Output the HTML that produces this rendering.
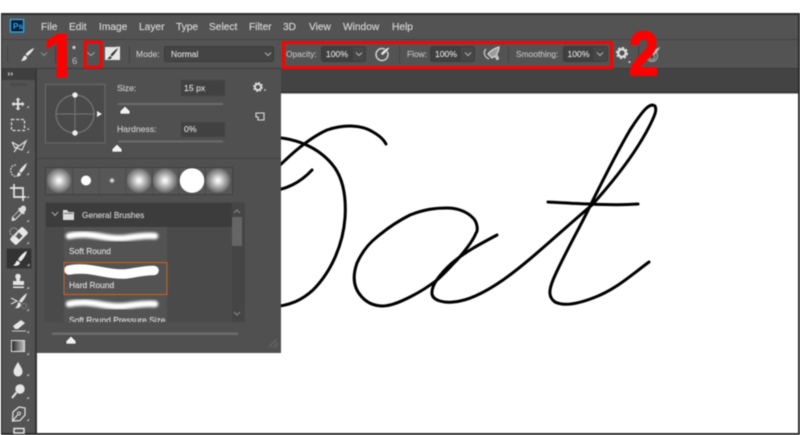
<!DOCTYPE html>
<html><head><meta charset="utf-8"><style>
html,body{margin:0;padding:0;background:#fff;width:800px;height:435px;overflow:hidden}
svg{display:block;filter:blur(.45px)}
text{font-family:"Liberation Sans",sans-serif;stroke-width:.15px}
</style></head><body>
<svg width="800" height="435" viewBox="0 0 800 435" xmlns="http://www.w3.org/2000/svg">
<defs>
<radialGradient id="sb"><stop offset="0" stop-color="#fff"/><stop offset=".15" stop-color="#eee"/><stop offset=".55" stop-color="#aaa"/><stop offset=".95" stop-color="#6c6c6c"/><stop offset="1" stop-color="#606060"/></radialGradient>
<linearGradient id="gr" x1="0" x2="1"><stop offset="0" stop-color="#222"/><stop offset="1" stop-color="#c4c4c4"/></linearGradient>
<filter id="b2" x="-10%" y="-80%" width="120%" height="260%"><feGaussianBlur stdDeviation="1.2"/></filter>
<clipPath id="c1"><path d="M40 25H70V66H67V80H56.500V66H40Z"/></clipPath>
<clipPath id="lst"><rect x="46" y="227" width="186" height="95"/></clipPath>
</defs>
<rect width="800" height="435" fill="#fff"/>
<!-- chrome -->
<rect x="1" y="13" width="799" height="422" fill="#2c2c2c"/>
<rect x="2" y="15" width="796" height="24" fill="#535353"/>
<rect x="2" y="39" width="796" height="1" fill="#424242"/>
<rect x="2" y="40" width="796" height="28" fill="#535353"/>
<rect x="2" y="68" width="796" height="1" fill="#3a3a3a"/>
<rect x="2" y="69" width="796" height="23" fill="#434343"/>
<rect x="2" y="92" width="796" height="1" fill="#222"/>
<rect x="37" y="93" width="761" height="1" fill="#aaa"/>
<rect x="37" y="94" width="761" height="339" fill="#fff"/>
<rect x="2" y="69" width="33" height="364" fill="#535353"/>
<rect x="2" y="69" width="33" height="11" fill="#3f3f3f"/>
<rect x="35" y="69" width="2" height="364" fill="#333"/>
<!-- drawing -->
<g fill="none" stroke="#000" stroke-width="3" stroke-linecap="round" stroke-linejoin="round">
<path d="M270 137C300 138 322 150 335 168C345 183 346 203 345 218C343 245 331 272 313 290C302 300 290 306 270 307"/>
<path d="M270 175C285 160 305 140 327 130C345 124 362 125 373 132C380 136 384 140 386 144"/>
<path d="M270 191C285 190 300 183 312 170"/>
<path d="M497 235C480 244 465 252 452 263C440 274 431 285 432 294C433 301 445 303 453 302C470 301 490 289 503 280C530 261 560 232 592 205C610 185 635 155 650 125C655 115 657 110 655 106C650 102 643 110 630 130C620 147 603 180 593 200C583 222 562 258 553 280C549 290 548 297 555 302C565 307 580 303 593 298C615 290 630 276 649 262"/>
<path d="M437 280C428 287 418 293 410 297C398 303 390 306 383 306C373 306 366 302 361 296C354 288 352 277 357 263C362 252 368 244 377 237C390 226 402 219 410 215C425 209 436 208 447 208C458 208 467 212 472 217C478 222 478 231 476 233C473 241 464 252 457 260C450 267 444 274 437 280Z"/>
<path d="M548 202C565 203 580 204 590 204C610 205 625 205 638 204" stroke-width="3"/>
</g>
<!-- menu -->
<rect x="10.500" y="19.500" width="13" height="12.500" fill="#001d34" stroke="#2fa3e8" stroke-width="1.400"/>
<text x="13" y="29" font-size="8" font-weight="bold" fill="#38a8f0">Ps</text>
<g font-size="10.200" fill="#d6d6d6" stroke="#d6d6d6">
<text x="41" y="30">File</text><text x="69" y="30">Edit</text><text x="99" y="30">Image</text><text x="139" y="30">Layer</text><text x="176" y="30">Type</text><text x="209" y="30">Select</text><text x="249" y="30">Filter</text><text x="283" y="30">3D</text><text x="309" y="30">View</text><text x="343" y="30">Window</text><text x="392" y="30">Help</text>
</g>
<!-- options -->
<rect x="7" y="46" width="1" height="16" fill="#444"/>
<path d="M34 48C31 49 27 52 25.500 54.500L27.500 56C30 54 33 51 34 48ZM25 55.500C23 56 23 59 21 61C24 61 27 60 27 57Z" fill="#e8e8e8"/>
<path d="M41 52.500L44 55.500L47 52.500" fill="none" stroke="#8f8f8f" stroke-width="1"/>
<rect x="55" y="46" width="1" height="17" fill="#404040"/>
<circle cx="74" cy="47.500" r="1.600" fill="#cfcfcf"/>
<text x="72" y="64" font-size="9.500" fill="#c0c0c0">6</text>
<path d="M87.500 52.500L91 55.500L94.500 52.500" fill="none" stroke="#aaa" stroke-width="1"/>
<path d="M105 47H114L120 46.500V60H105Z" fill="#e6e6e6"/>
<path d="M118 48C115 50 112 53 110.500 55L112 56.500C114 54.500 117 51 118 48ZM110 56C109 57 109 58 107 59C110 59.500 112 58.500 111.500 57Z" fill="#333"/>
<rect x="129" y="46" width="1" height="17" fill="#404040"/>
<text x="136" y="57" font-size="8.500" fill="#c4c4c4" stroke="#c4c4c4">Mode:</text>
<rect x="164.500" y="46.500" width="109" height="15" rx="2" fill="#444" stroke="#3a3a3a"/>
<text x="171" y="57" font-size="8.500" fill="#dcdcdc" stroke="#dcdcdc">Normal</text>
<path d="M265 52.500L268 55.500L271 52.500" fill="none" stroke="#b0b0b0" stroke-width="1"/>
<!-- fields -->
<g fill="#474747" stroke="#3c3c3c">
<rect x="321.500" y="46.500" width="44" height="15" rx="2"/><rect x="430.500" y="46.500" width="44" height="15" rx="2"/><rect x="563.500" y="46.500" width="44" height="15" rx="2"/>
</g>
<g fill="#3f3f3f"><rect x="322" y="47" width="31" height="14"/><rect x="431" y="47" width="30" height="14"/><rect x="564" y="47" width="29.500" height="14"/></g>
<g font-size="8.400" fill="#bdbdbd" stroke="#bdbdbd"><text x="286" y="57">Opacity:</text><text x="407" y="57">Flow:</text><text x="516" y="57">Smoothing:</text></g>
<g font-size="8.600" fill="#dcdcdc" stroke="#dcdcdc"><text x="326" y="57">100%</text><text x="435" y="57">100%</text><text x="567.500" y="57">100%</text></g>
<g fill="none" stroke="#b0b0b0" stroke-width="1"><path d="M356 52.500L359 55.500L362 52.500"/><path d="M465 52.500L468 55.500L471 52.500"/><path d="M597 52.500L600 55.500L603 52.500"/></g>
<circle cx="382" cy="54.500" r="6" fill="none" stroke="#d0d0d0" stroke-width="1.500"/>
<path d="M390 47C386 48 382 51 380.500 54L382.500 55.500C385 53.500 389 50 390 47Z" fill="#ececec" stroke="#535353" stroke-width=".6"/>
<path d="M486 49C483 52 484 57 489 59" fill="none" stroke="#c8c8c8" stroke-width="1.300"/>
<path d="M499 47C495 48 490 51 488 54L492 58L495 56L497 59.500L498.500 58.500L496.500 54.500C498 52 499 49 499 47Z" fill="#9a9a9a" stroke="#d8d8d8" stroke-width="1.200"/>
<rect x="399" y="46" width="1" height="17" fill="#444"/><rect x="508" y="46" width="1" height="17" fill="#444"/>
<circle cx="622" cy="53" r="3.800" fill="none" stroke="#dcdcdc" stroke-width="2.400"/>
<circle cx="622" cy="53" r="5.400" fill="none" stroke="#dcdcdc" stroke-width="1.500" stroke-dasharray="2.200 2"/>
<circle cx="629.500" cy="62" r="1" fill="#ddd"/>
<rect x="638" y="46" width="1" height="17" fill="#404040"/>
<circle cx="652" cy="56" r="5.500" fill="none" stroke="#aaa" stroke-width="1"/><circle cx="652" cy="57" r="2.800" fill="none" stroke="#aaa" stroke-width="1"/>
<path d="M660 47C657 48 653 51 652 54L654 55C656.500 53 659 50 660 47Z" fill="#bbb"/>
<!-- toolbar -->
<path d="M8 72.500L9.500 74L8 75.500M11 72.500L12.500 74L11 75.500" fill="none" stroke="#c8c8c8" stroke-width="1"/>
<rect x="10" y="83" width="17" height="3" fill="#4a4a4a"/>
<g fill="#e2e2e2">
<path d="M18 97.500L20.500 100H19V103H22V101.500L24.500 104L22 106.500V105H19V108H20.500L18 110.500L15.500 108H17V105H14V106.500L11.500 104L14 101.500V103H17V100H15.500Z"/>
</g>
<rect x="11.500" y="119.500" width="13" height="11" fill="none" stroke="#ddd" stroke-width="1.300" stroke-dasharray="3 1.700"/>
<path d="M12 142L19 146L26 141L22 150L17 148L14 152M12 142L15 148L19 146" fill="none" stroke="#ddd" stroke-width="1.200"/>
<path d="M16 165C12 165 10 168 11 172C12 176 15 177 17 176" fill="none" stroke="#ccc" stroke-width="1.300" stroke-dasharray="2 1"/>
<path d="M27 163C24 165 21 168 19 171L21 173C23.500 171 26 167 27 163ZM18.500 172C17 173 18 175 16 176.500C19 177 22 175 20.500 173.500Z" fill="#e4e4e4"/>
<path d="M14 184V197H26M10 188H23V201" fill="none" stroke="#e4e4e4" stroke-width="1.700"/>
<path d="M25 206C23 205 21 206 20.500 208L19.500 207.500L18 209L19 210L12 217L11.500 221L15 220.500L22 213.500L23.500 214.500L25 213L24 212C26 211.500 27 209 25 206Z" fill="#ddd"/>
<path d="M13 217L19 211L21 213L15 219Z" fill="#535353"/>
<g transform="rotate(-45 19 236)"><rect x="10" y="231.500" width="18" height="9" rx="2" fill="#e8e8e8"/><rect x="16.500" y="233.500" width="5" height="5" fill="#555"/></g>
<circle cx="14" cy="232" r="4" fill="none" stroke="#bbb" stroke-dasharray="1.500 1" stroke-width="1"/>
<rect x="6.500" y="248.500" width="25" height="20" rx="1" fill="#333" stroke="#454545"/>
<path d="M27 251C24 252 20 256 18 259.500L20.500 261.500C23.500 259 26 255 27 251ZM17.500 260.500C15.500 261.500 16 264 13 265.500C17 266.500 21 264.500 19.500 262Z" fill="#eee"/>
<path d="M16 278.500a2.800 2.800 0 1 1 4 0L19.800 281H24V285H13V281H16.500ZM13 286.500H24V288H13Z" fill="#e4e4e4"/>
<path d="M27 293C24 295 21 298 19 301L21 303C23.500 301 26 297 27 293ZM18.500 302C17 304 18 306 15 308C19 309 22 306 20.500 303.500Z" fill="#e4e4e4"/>
<path d="M11 298L17 301L11 304" fill="none" stroke="#ddd" stroke-width="1.200"/>
<circle cx="24" cy="306" r="2.500" fill="none" stroke="#999" stroke-dasharray="1 1"/>
<path d="M13 326L21 320L25 323L18 329H15Z" fill="#e6e6e6"/><path d="M12 331H26" stroke="#ccc"/>
<rect x="11.500" y="340.500" width="13" height="11" fill="url(#gr)" stroke="#ddd"/>
<path d="M18 362C15 367 13.500 369 13.500 372A4.500 4.500 0 0 0 22.500 372C22.500 369 21 367 18 362Z" fill="#e6e6e6"/>
<circle cx="20" cy="389" r="4.700" fill="#e6e6e6"/><path d="M16.500 392.500L12 398" stroke="#e6e6e6" stroke-width="2"/>
<path d="M25 408L19 407L13 412L12.500 421L20 420.500L25 415L25 408ZM12.500 421L17.500 415" fill="none" stroke="#ddd" stroke-width="1.300"/>
<circle cx="19" cy="413.500" r="1.500" fill="none" stroke="#ddd"/>
<path d="M14 428.500H24V433H14Z" fill="none" stroke="#e4e4e4" stroke-width="1.500"/>
<g fill="#bdbdbd"><path d="M29 108v-2.500l-2.500 2.500zM29 130v-2.500l-2.500 2.500zM29 153v-2.500l-2.500 2.500zM29 175v-2.500l-2.500 2.500zM29 198v-2.500l-2.500 2.500zM29 222v-2.500l-2.500 2.500zM29 244v-2.500l-2.500 2.500zM29.500 266v-2.500l-2.500 2.500zM29 289v-2.500l-2.500 2.500zM29 311v-2.500l-2.500 2.500zM29 333v-2.500l-2.500 2.500zM29 355v-2.500l-2.500 2.500zM29 376v-2.500l-2.500 2.500zM29 399v-2.500l-2.500 2.500zM29 421v-2.500l-2.500 2.500z"/></g>
<!-- brush panel -->
<rect x="37" y="69" width="244" height="284" fill="#505050"/>
<rect x="36" y="69" width="1" height="284" fill="#3c3c3c"/>
<rect x="45.500" y="84.500" width="59.500" height="58.500" fill="#4a4a4a" stroke="#6c6c6c"/>
<circle cx="75" cy="114" r="19" fill="none" stroke="#767676" stroke-width="1.200"/>
<path d="M75 95V133M56 114H94" stroke="#767676" stroke-width="1"/>
<circle cx="75" cy="95" r="2.700" fill="#eee"/><circle cx="75" cy="133" r="2.700" fill="#eee"/>
<path d="M97 111L102 114L97 117Z" fill="#eee"/>
<g font-size="8.700" fill="#c8c8c8" stroke="#c8c8c8"><text x="117" y="91">Size:</text><text x="117" y="132">Hardness:</text></g>
<rect x="181" y="80" width="44" height="16" fill="#414141" stroke="#4a4a4a"/>
<rect x="181" y="122" width="44" height="15" fill="#414141" stroke="#4a4a4a"/>
<g font-size="8.700" fill="#dadada" stroke="#dadada"><text x="184" y="91">15 px</text><text x="184" y="132">0%</text></g>
<circle cx="258" cy="87" r="3" fill="none" stroke="#dcdcdc" stroke-width="1.900"/>
<circle cx="258" cy="87" r="4.300" fill="none" stroke="#dcdcdc" stroke-width="1.300" stroke-dasharray="1.800 1.600"/>
<circle cx="265" cy="90" r=".9" fill="#ddd"/>
<path d="M256 113H264V120H258V117H256Z" fill="none" stroke="#ddd" stroke-width="1.100"/>
<rect x="118" y="103" width="105" height="2" fill="#6c6c6c"/>
<rect x="118" y="140.500" width="105" height="2" fill="#6c6c6c"/>
<path d="M125 106L130 111V114H120V111Z" fill="#f2f2f2" stroke="#333" stroke-width=".6"/>
<path d="M117 144L122 149V152H112V149Z" fill="#f2f2f2" stroke="#333" stroke-width=".6"/>
<rect x="37" y="158" width="244" height="1" fill="#404040"/>
<rect x="45" y="167" width="188" height="28" fill="#3f3f3f"/>
<g fill="#575757"><rect x="46" y="168" width="26.500" height="26"/><rect x="73" y="168" width="26" height="26"/><rect x="99.500" y="168" width="26" height="26"/><rect x="126" y="168" width="26" height="26"/><rect x="152.500" y="168" width="26" height="26"/><rect x="179" y="168" width="26" height="26"/><rect x="205.500" y="168" width="26.500" height="26"/></g>
<g fill="url(#sb)"><circle cx="59" cy="180.500" r="12.500"/><circle cx="139" cy="180.500" r="12.500"/><circle cx="165" cy="180.500" r="12.500"/><circle cx="218" cy="180.500" r="12.500"/></g>
<circle cx="86" cy="180.500" r="5" fill="#fff"/><circle cx="112" cy="180.500" r="3" fill="url(#sb)"/><circle cx="192" cy="180.500" r="12.300" fill="#fff"/>
<!-- list -->
<rect x="45" y="202" width="200" height="120" fill="#484848"/>
<rect x="46" y="203" width="186" height="24" fill="#3c3c3c"/>
<rect x="46" y="227" width="186" height="95" fill="#4a4a4a"/>
<rect x="232" y="203" width="13" height="119" fill="#454545"/>
<rect x="232" y="217" width="10" height="29" fill="#656565"/>
<path d="M234 213L237 210L240 213M234 312L237 315L240 312" fill="none" stroke="#8a8a8a" stroke-width="1"/>
<path d="M52 212L55 215.500L58 212" fill="none" stroke="#aaa" stroke-width="1"/>
<path d="M63 210H67L68.500 212H74V220H63Z" fill="#dcdcdc"/><rect x="64" y="213" width="9" height=".8" fill="#555"/>
<text x="82" y="218" font-size="8.300" fill="#cfcfcf" stroke="#cfcfcf">General Brushes</text>
<g clip-path="url(#lst)">
<rect x="64" y="227" width="103" height="95" fill="#535353"/>
<path d="M69 236C90 231 105 240 125 238C135 237 145 235 155 236" fill="none" stroke="#fff" stroke-width="6.500" stroke-linecap="round" filter="url(#b2)"/>
<path d="M69 270C90 266 105 275 125 274C135 273 145 270 154 270.500" fill="none" stroke="#fff" stroke-width="9.500" stroke-linecap="round"/>
<path d="M69 304C90 299 105 308 125 306C135 305 145 303 155 304" fill="none" stroke="#fff" stroke-width="6.500" stroke-linecap="round" filter="url(#b2)"/>
<g font-size="8.400" fill="#dcdcdc" stroke="#dcdcdc"><text x="69" y="254">Soft Round</text><text x="69" y="288">Hard Round</text><text x="69" y="323">Soft Round Pressure Size</text></g>
</g>
<rect x="64" y="262.500" width="103" height="32" fill="none" stroke="#c4622a" stroke-width="1"/>
<rect x="52" y="332.500" width="186" height="2.500" fill="#6c6c6c"/>
<path d="M71 336L76 341V344H66V341Z" fill="#f2f2f2" stroke="#333" stroke-width=".6"/>
<path d="M269 347L277 339M272 348L278 342M275 348L278 345" stroke="#6a6a6a" stroke-width="1"/>
<!-- annotations -->
<rect x="85" y="42" width="16" height="25" fill="none" stroke="#f00" stroke-width="3"/>
<rect x="283.500" y="42.500" width="328" height="25" fill="none" stroke="#f00" stroke-width="3"/>
<g clip-path="url(#c1)"><text x="43" y="77" font-size="62" font-weight="bold" fill="#f00" stroke="#f00" style="stroke-width:1.500px">1</text></g>
<text transform="translate(629 75) scale(.85 1)" font-size="62" font-weight="bold" fill="#f00" stroke="#f00" style="stroke-width:2px">2</text>
</svg>
</body></html>
